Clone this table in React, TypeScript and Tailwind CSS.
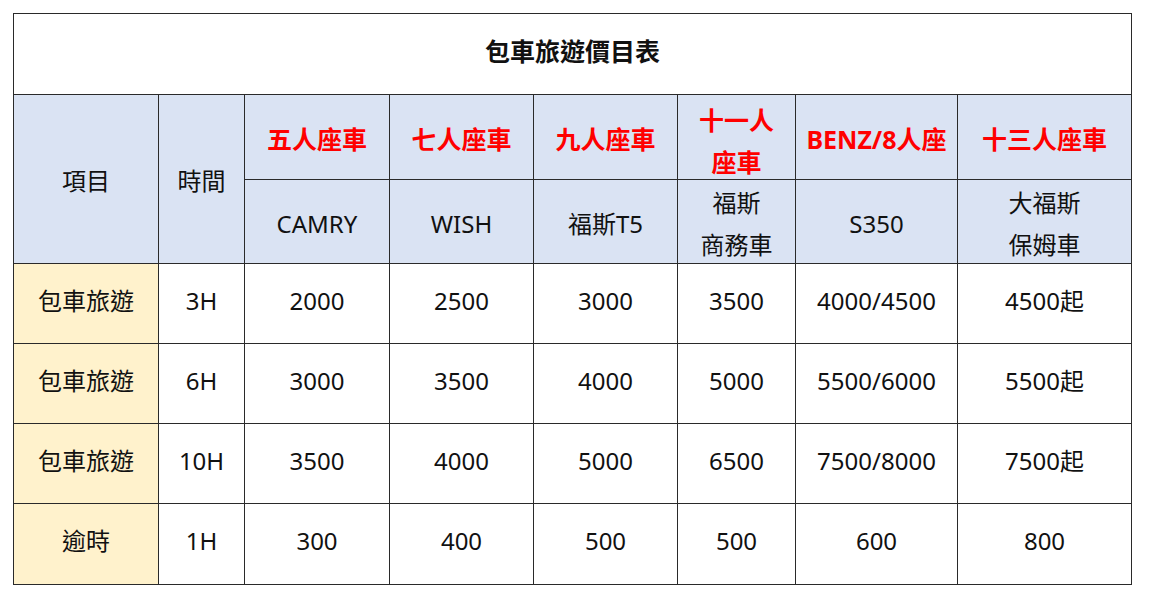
import React from "react";

const font = { fontFamily: '"Noto Sans", "Noto Sans CJK TC", sans-serif' };

const cols = ["五人座車", "七人座車", "九人座車", "十一人\n座車", "BENZ/8人座", "十三人座車"];
const models = ["CAMRY", "WISH", "福斯T5", "福斯\n商務車", "S350", "大福斯\n保姆車"];
const rows: string[][] = [
  ["包車旅遊", "3H", "2000", "2500", "3000", "3500", "4000/4500", "4500起"],
  ["包車旅遊", "6H", "3000", "3500", "4000", "5000", "5500/6000", "5500起"],
  ["包車旅遊", "10H", "3500", "4000", "5000", "6500", "7500/8000", "7500起"],
  ["逾時", "1H", "300", "400", "500", "500", "600", "800"],
];

function Lines({ t }: { t: string }) {
  const parts = t.split("\n");
  return (
    <>
      {parts.map((p, i) => (
        <span key={i} className="block">
          {p}
        </span>
      ))}
    </>
  );
}

export default function App() {
  return (
    <div className="w-[1151px] h-[603px] bg-white" style={font}>
      <div className="pl-[13px] pt-[13px]">
        <div className="grid w-[1119px] grid-cols-[144px_85px_144px_143px_143px_117px_161px_173px] grid-rows-[80px_84px_83px_79px_79px_79px_80px] gap-px bg-[#2a2a2a] p-px text-[24px] leading-[42px] text-[#111]">
          <div className="col-span-8 flex items-center justify-center bg-white pb-[6px] text-[25px] font-bold">
            包車旅遊價目表
          </div>
          <div className="row-span-2 flex items-center justify-center bg-[#dae3f3] pt-[4px]">項目</div>
          <div className="row-span-2 flex items-center justify-center bg-[#dae3f3] pt-[4px]">時間</div>
          {cols.map((c, i) => (
            <div
              key={"c" + i}
              className={
                c.includes("\n")
                  ? "flex flex-col items-center justify-center bg-[#dae3f3] pt-[7px] text-center text-[25px] font-bold text-[#ff0000]"
                  : "flex flex-col items-center justify-center bg-[#dae3f3] pt-[4px] text-center text-[25px] font-bold text-[#ff0000]"
              }
            >
              <Lines t={c} />
            </div>
          ))}
          {models.map((m, i) => (
            <div
              key={"m" + i}
              className="flex flex-col items-center justify-center bg-[#dae3f3] pt-[4px] text-center"
            >
              <Lines t={m} />
            </div>
          ))}
          {rows.map((r, ri) =>
            r.map((v, ci) => (
              <div
                key={ri + "-" + ci}
                className={
                  ci === 0
                    ? "flex items-center justify-center bg-[#fff2cc] pb-[6px]"
                    : "flex items-center justify-center bg-white pb-[6px]"
                }
              >
                {v}
              </div>
            ))
          )}
        </div>
      </div>
    </div>
  );
}
